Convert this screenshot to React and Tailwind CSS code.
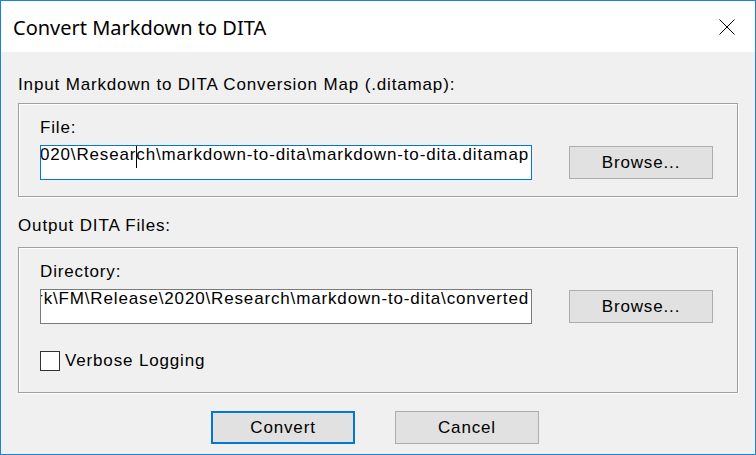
import React from "react";

const body = { fontFamily: '"Liberation Sans", Arial, sans-serif' };

function Field({ children, focused }) {
  return (
    <div
      className={`w-[492px] h-[35px] bg-white overflow-hidden flex justify-end pr-[2px] ${
        focused ? "border border-[#0078d7]" : "border border-[#7a7a7a]"
      }`}
    >
      <div className="whitespace-nowrap text-[17px] leading-[18px] tracking-[0.85px] text-black shrink-0">{children}</div>
    </div>
  );
}

function Btn({ children, primary }) {
  return (
    <div
      className={`w-[144px] h-[33px] bg-[#e1e1e1] flex items-center justify-center text-[17px] leading-[20px] tracking-[0.85px] text-black ${
        primary ? "border-2 border-[#0078d7]" : "border border-[#adadad]"
      }`}
    >
      {children}
    </div>
  );
}

const lbl = "text-[17px] leading-[20px] tracking-[0.85px] text-black";

export default function App() {
  return (
    <div className="w-[756px] h-[455px] border border-[#1883d7] flex flex-col bg-[#f0f0f0]" style={body}>
      <div className="h-[51px] bg-white flex items-start justify-between pl-[12px] pr-[20px] shrink-0">
        <div
          className="mt-[13px] text-[20px] leading-[27px] text-black"
          style={{ fontFamily: '"Noto Sans", "Open Sans", sans-serif' }}
        >
          Convert Markdown to DITA
        </div>
        <svg width="16" height="16" viewBox="0 0 16 16" className="mt-[18px]">
          <path d="M0.5 0.5 L15.5 15.5 M15.5 0.5 L0.5 15.5" stroke="#000" strokeWidth="1" fill="none" />
        </svg>
      </div>

      <div className="flex-1 flex flex-col pl-[17px] pt-[23px]">
        <div className={lbl}>Input Markdown to DITA Conversion Map (.ditamap):</div>
        <div className="mt-[8px] w-[720px] border border-[#a0a0a0] shadow-[inset_1px_1px_0_#fff,1px_1px_0_#fff] pl-[21px] pt-[14px] pb-[16px]">
          <div className={lbl}>File:</div>
          <div className="mt-[7px] flex items-center">
            <Field focused>
              C:\Users\jsmith\Documents\Work\FM\Release\2020\Resear
              <span className="inline-block w-px h-[23px] bg-black align-top -mt-[1px] -mr-px"></span>
              ch\markdown-to-dita\markdown-to-dita.ditamap
            </Field>
            <div className="ml-[37px]">
              <Btn>Browse...</Btn>
            </div>
          </div>
        </div>

        <div className={`mt-[19px] ${lbl}`}>Output DITA Files:</div>
        <div className="mt-[11px] w-[720px] border border-[#a0a0a0] shadow-[inset_1px_1px_0_#fff,1px_1px_0_#fff] pl-[21px] pt-[14px] pb-[21px]">
          <div className={lbl}>Directory:</div>
          <div className="mt-[7px] flex items-center">
            <Field>C:\Users\jsmith\Documents\Work\FM\Release\2020\Research\markdown-to-dita\converted</Field>
            <div className="ml-[37px]">
              <Btn>Browse...</Btn>
            </div>
          </div>
          <div className="mt-[27px] flex items-center gap-[5px]">
            <div className="w-[20px] h-[20px] bg-white border border-[#333333]"></div>
            <div className={lbl}>Verbose Logging</div>
          </div>
        </div>

        <div className="mt-[18px] flex pl-[193px] gap-[40px]">
          <Btn primary>Convert</Btn>
          <Btn>Cancel</Btn>
        </div>
      </div>
    </div>
  );
}
